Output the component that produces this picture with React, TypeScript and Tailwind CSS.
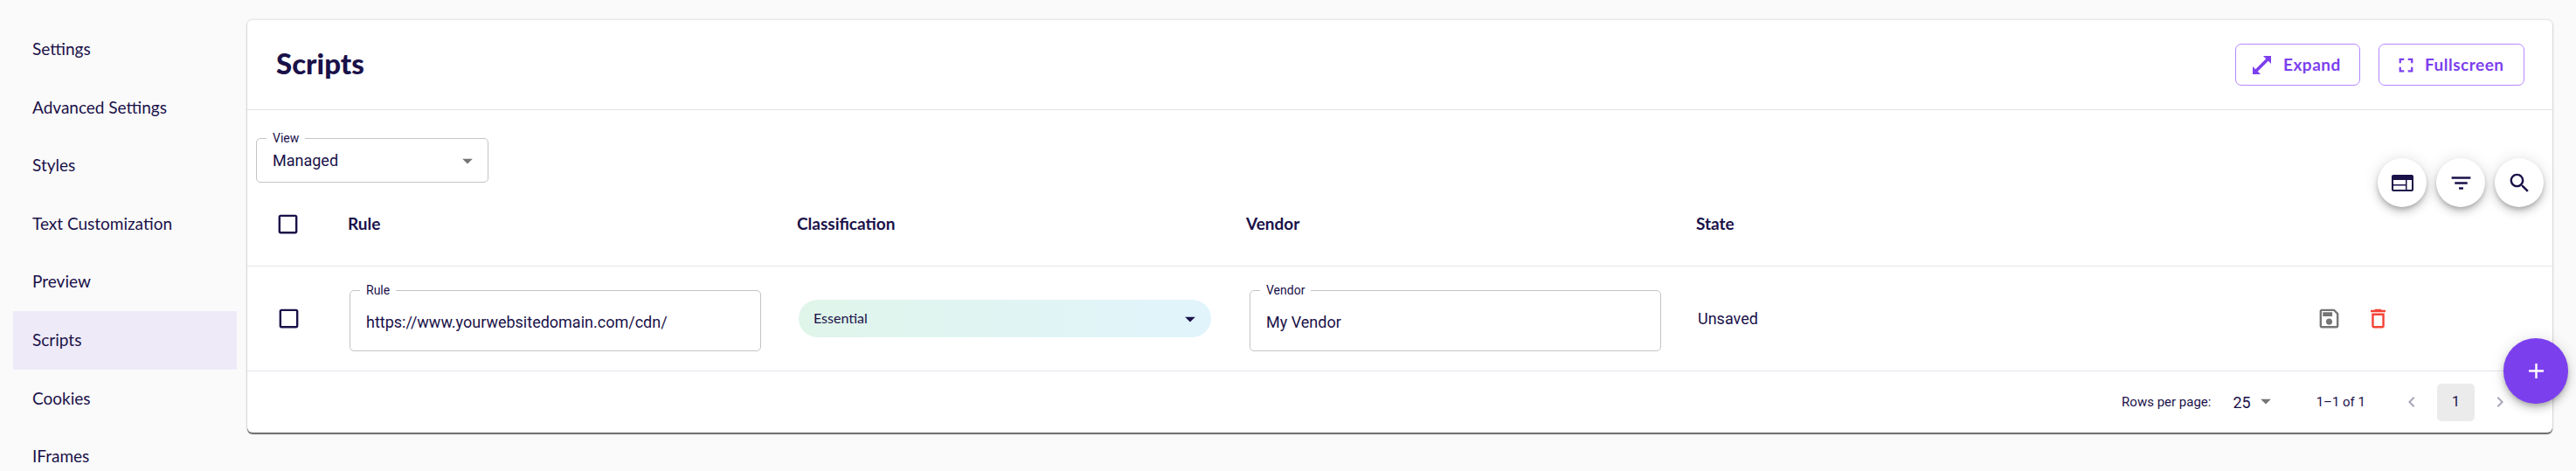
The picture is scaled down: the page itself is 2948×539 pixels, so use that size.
const navItems = ["Settings", "Advanced Settings", "Styles", "Text Customization", "Preview", "Scripts", "Cookies", "IFrames"];

function MuiIcon({ d, className }: { d: string; className: string }) {
  return (
    <svg viewBox="0 0 24 24" fill="currentColor" className={className}>
      <path d={d} />
    </svg>
  );
}

const CHECKBOX = "M19 5v14H5V5h14m0-2H5c-1.1 0-2 .9-2 2v14c0 1.1.9 2 2 2h14c1.1 0 2-.9 2-2V5c0-1.1-.9-2-2-2z";
const CARET = "M7 10l5 5 5-5z";

function OutlinedField({ label, value }: { label: string; value: string }) {
  return (
    <div className="relative w-[471px] h-[70px] mt-[5px] border border-[#c4c4c4] rounded-[5px] flex items-center pl-[18px]">
      <span className="absolute -top-[10px] left-[11px] bg-white px-[7px] text-[14px] leading-[18px] text-[#1a1149]">
        {label}
      </span>
      <span className="text-[18px] text-[#1a1149] mt-[2px]">{value}</span>
    </div>
  );
}

function RoundButton({ children }: { children: React.ReactNode }) {
  return (
    <button className="w-[56px] h-[56px] rounded-full bg-white flex items-center justify-center text-[#1a1149] shadow-[0_3px_5px_-1px_rgba(0,0,0,0.2),0_6px_10px_0_rgba(0,0,0,0.14),0_1px_18px_0_rgba(0,0,0,0.12)]">
      {children}
    </button>
  );
}

export default function App() {
  return (
    <div className="flex h-[539px] overflow-hidden bg-[#fafafa] pt-[23px] font-[Lato,sans-serif] text-[#1a1149]">
      {/* Sidebar */}
      <nav className="w-[283px] shrink-0 pl-[15px] pr-[12px]">
        {navItems.map((item) => (
          <div
            key={item}
            className={`h-[66.6px] flex items-center pl-[22px] text-[19px] ${item === "Scripts" ? "bg-[#eeeaf8]" : ""}`}
          >
            {item}
          </div>
        ))}
      </nav>

      {/* Card */}
      <div className="relative w-[2638px] h-[472px] bg-white rounded-[6px] shadow-[0_2px_1px_0_rgba(0,0,0,0.55),0_0_3px_rgba(0,0,0,0.22)]">
        <header className="h-[103px] border-b border-[#e2e2e6] flex items-center justify-between pl-[33px] pr-[32px]">
          <h1 className="text-[33px] font-black leading-none -mt-[3px]">Scripts</h1>
          <div className="flex items-center gap-[21px]">
            <button className="h-[48px] w-[143px] border border-[#b388ff] rounded-[7px] flex items-center pl-[19px] text-[#7c3fee] text-[19px] font-bold tracking-[0.5px]">
              <svg viewBox="0 0 21 21" fill="currentColor" className="w-[21px] h-[21px]">
                <path d="M12 0h9v9l-3.2-3.2L5.8 17.8 9 21H0v-9l3.2 3.2L15.2 3.2z" />
              </svg>
              <span className="ml-[14px]">Expand</span>
            </button>
            <button className="h-[48px] w-[167px] border border-[#b388ff] rounded-[7px] flex items-center pl-[17px] text-[#7c3fee] text-[19px] font-bold tracking-[0.5px]">
              <MuiIcon
                d="M7 14H5v5h5v-2H7v-3zm-2-4h2V7h3V5H5v5zm12 7h-3v2h5v-5h-2v3zM14 5v2h3v3h2V5h-5z"
                className="w-[27px] h-[27px]"
              />
              <span className="ml-[8px]">Fullscreen</span>
            </button>
          </div>
        </header>

        {/* Toolbar */}
        <div className="h-[82px] flex justify-between pl-[10px] pr-[10px] font-[Roboto,sans-serif]">
          <div className="relative w-[266px] h-[51px] mt-[32px] border border-[#c4c4c4] rounded-[5px] flex items-center justify-between pl-[18px] pr-[9px]">
            <span className="absolute -top-[10px] left-[11px] bg-white px-[7px] text-[14px] leading-[18px]">View</span>
            <span className="text-[18px]">Managed</span>
            <MuiIcon d={CARET} className="w-[28px] h-[28px] text-[#757575]" />
          </div>
          <div className="flex gap-[11px] mt-[55px] h-[56px]">
            <RoundButton>
              <svg viewBox="0 0 25 19" fill="currentColor" className="w-[25px] h-[19px]">
                <path
                  fillRule="evenodd"
                  d="M2 0h21a2 2 0 0 1 2 2v15a2 2 0 0 1-2 2H2a2 2 0 0 1-2-2V2a2 2 0 0 1 2-2zM2 6v5h14V6zm0 6.5V17h14v-4.5zM17.5 6v11H23V6z"
                />
              </svg>
            </RoundButton>
            <RoundButton>
              <MuiIcon d="M10 18h4v-2h-4v2zM3 6v2h18V6H3zm3 7h12v-2H6v2z" className="w-[29px] h-[29px]" />
            </RoundButton>
            <RoundButton>
              <MuiIcon
                d="M15.5 14h-.79l-.28-.27C15.41 12.59 16 11.11 16 9.5 16 5.91 13.09 3 9.5 3S3 5.91 3 9.5 5.91 16 9.5 16c1.61 0 3.09-.59 4.23-1.57l.27.28v.79l5 4.99L20.49 19l-4.99-5zm-6 0C7.01 14 5 11.99 5 9.5S7.01 5 9.5 5 14 7.01 14 9.5 11.99 14 9.5 14z"
                className="w-[29px] h-[29px]"
              />
            </RoundButton>
          </div>
        </div>

        {/* Table head */}
        <div className="h-[97px] border-b border-[#e6e6ee] grid grid-cols-[115px_514px_514px_515px_1fr] items-center text-[19px] font-bold">
          <div className="pl-[32px]">
            <MuiIcon d={CHECKBOX} className="w-[29px] h-[29px]" />
          </div>
          <div>Rule</div>
          <div>Classification</div>
          <div>Vendor</div>
          <div>State</div>
        </div>

        {/* Table row */}
        <div className="h-[120px] border-b border-[#e6e6ee] grid grid-cols-[115px_514px_514px_515px_1fr] items-center font-[Roboto,sans-serif]">
          <div className="pl-[33px]">
            <MuiIcon d={CHECKBOX} className="w-[29px] h-[29px]" />
          </div>
          <div className="pl-[2px]">
            <OutlinedField label="Rule" value="https://www.yourwebsitedomain.com/cdn/" />
          </div>
          <div className="pl-[2px]">
            <div className="w-[472px] h-[43px] rounded-full bg-gradient-to-r from-[#e0f5ea] to-[#e1f4fc] flex items-center justify-between pl-[17px] pr-[10px] font-[Lato,sans-serif] text-[16px]">
              <span className="-mt-[2px]">Essential</span>
              <MuiIcon d={CARET} className="w-[28px] h-[28px]" />
            </div>
          </div>
          <div className="pl-[4px]">
            <OutlinedField label="Vendor" value="My Vendor" />
          </div>
          <div className="pl-[2px] flex items-center justify-between pr-[185px]">
            <span className="text-[18px]">Unsaved</span>
            <div className="flex items-center gap-[27px]">
              <MuiIcon
                d="M17 3H5c-1.11 0-2 .9-2 2v14c0 1.1.89 2 2 2h14c1.1 0 2-.9 2-2V7l-4-4zm2 16H5V5h11.17L19 7.83V19zm-7-7c-1.66 0-3 1.34-3 3s1.34 3 3 3 3-1.34 3-3-1.34-3-3-3zM6 6h9v4H6z"
                className="w-[29px] h-[29px] text-[#757575]"
              />
              <MuiIcon
                d="M16 9v10H8V9h8m-1.5-6h-5l-1 1H5v2h14V4h-3.5l-1-1zM18 7H6v12c0 1.1.9 2 2 2h8c1.1 0 2-.9 2-2V7z"
                className="w-[29px] h-[29px] text-[#f44336]"
              />
            </div>
          </div>
        </div>

        {/* Pagination */}
        <div className="h-[70px] flex items-center justify-end pr-[48px] font-[Roboto,sans-serif] text-[15px]">
          <span>Rows per page:</span>
          <span className="ml-[25px] text-[18px]">25</span>
          <MuiIcon d={CARET} className="w-[28px] h-[28px] text-[#757575] ml-[3px] -mt-[2px]" />
          <span className="ml-[44px]">1–1 of 1</span>
          <MuiIcon
            d="M15.41 7.41 14 6l-6 6 6 6 1.41-1.41L10.83 12z"
            className="w-[24px] h-[24px] ml-[41px] text-[#a8a5bb]"
          />
          <div className="ml-[17px] w-[43px] h-[43px] rounded-[5px] bg-[#ebebeb] flex items-center justify-center text-[16px]">1</div>
          <MuiIcon
            d="M10 6 8.59 7.41 13.17 12l-4.58 4.59L10 18l6-6z"
            className="w-[24px] h-[24px] ml-[17px] text-[#a8a5bb]"
          />
        </div>

        {/* Add button */}
        <button className="absolute top-[364px] -right-[18px] w-[74px] h-[75px] rounded-full bg-[#7c3fee] text-white flex items-center justify-center shadow-[0_3px_5px_-1px_rgba(0,0,0,0.2),0_6px_10px_0_rgba(0,0,0,0.14),0_1px_18px_0_rgba(0,0,0,0.12)]">
          <MuiIcon d="M19 13h-6v6h-2v-6H5v-2h6V5h2v6h6v2z" className="w-[29px] h-[29px]" />
        </button>
      </div>
    </div>
  );
}
